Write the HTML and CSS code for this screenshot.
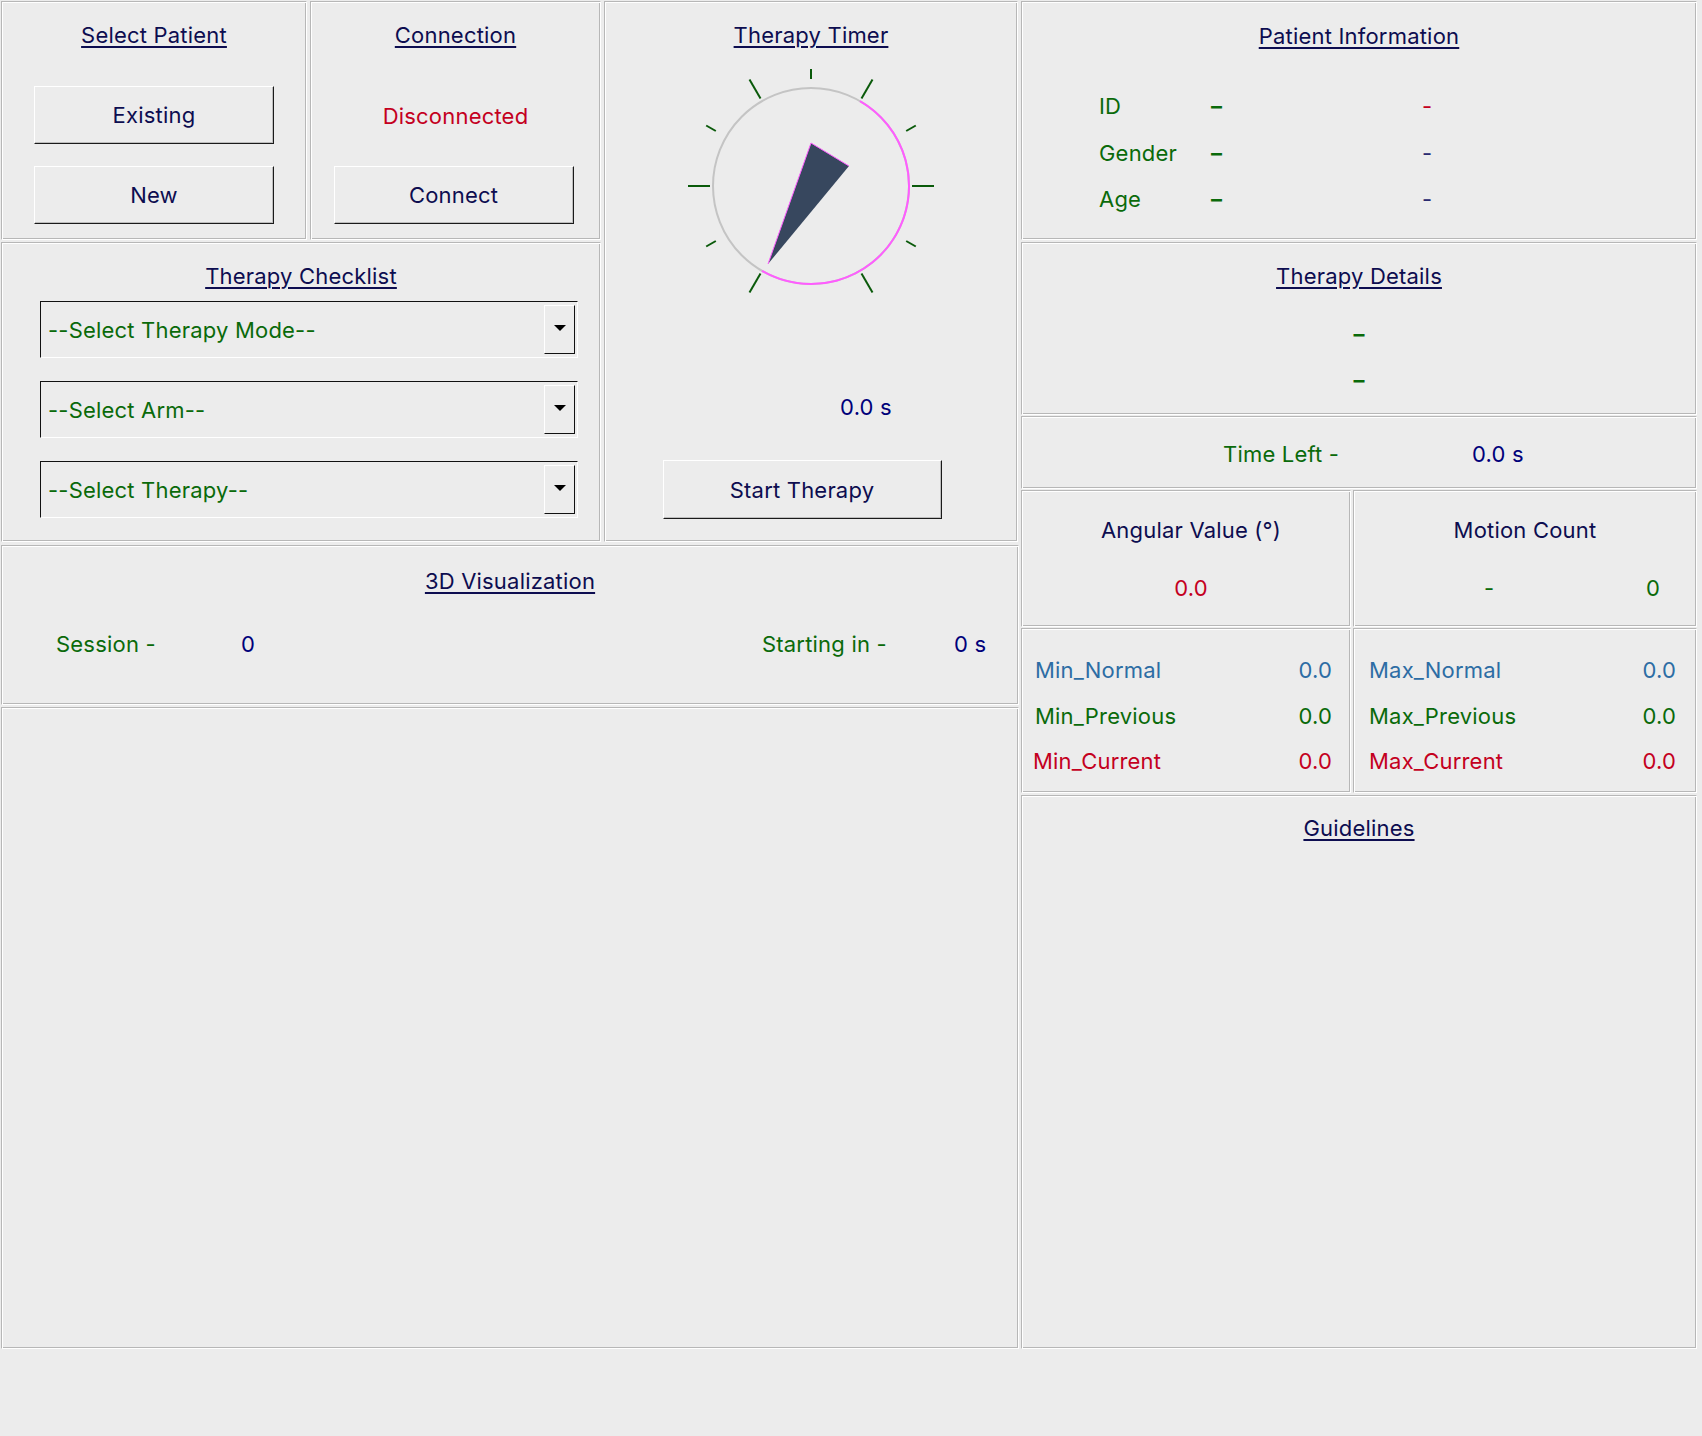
FILE: index.html
```html
<!DOCTYPE html>
<html>
<head>
<meta charset="utf-8">
<title>Therapy Console</title>
<link rel="stylesheet" href="styles.css">
</head>
<body>
<div class="app">
  <div class="leftcol">
    <div class="row1">
      <div class="lsub">
        <div class="toprow">
          <section class="frame sp">
            <h2 class="title">Select Patient</h2>
            <div class="btn btn-existing">Existing</div>
            <div class="btn btn-new">New</div>
          </section>
          <section class="frame conn">
            <h2 class="title">Connection</h2>
            <div class="status">Disconnected</div>
            <div class="btn btn-connect">Connect</div>
          </section>
        </div>
        <section class="frame checklist">
          <h2 class="title">Therapy Checklist</h2>
          <div class="combo combo-first"><span class="combo-text">--Select Therapy Mode--</span><span class="combo-btn"><span class="arrow"></span></span></div>
          <div class="combo"><span class="combo-text">--Select Arm--</span><span class="combo-btn"><span class="arrow"></span></span></div>
          <div class="combo"><span class="combo-text">--Select Therapy--</span><span class="combo-btn"><span class="arrow"></span></span></div>
        </section>
      </div>
      <section class="frame timer">
        <h2 class="title">Therapy Timer</h2>
        <svg class="dial" width="260" height="260" viewBox="0 0 260 260">
          <circle cx="130" cy="130" r="98" fill="none" stroke="#c4c4c4" stroke-width="2"/>
          <path d="M179 45.1 A98 98 0 0 1 81 214.9" fill="none" stroke="#ff5cff" stroke-width="2"/>
          <g stroke="#0a5a0a" stroke-width="2">
            <line x1="231" y1="130" x2="253" y2="130"/>
            <line x1="29" y1="130" x2="7" y2="130"/>
            <line x1="180.5" y1="42.5" x2="191.5" y2="23.5"/>
            <line x1="79.5" y1="42.5" x2="68.5" y2="23.5"/>
            <line x1="180.5" y1="217.5" x2="191.5" y2="236.5"/>
            <line x1="79.5" y1="217.5" x2="68.5" y2="236.5"/>
            <line x1="225.2" y1="75" x2="234.8" y2="69.5"/>
            <line x1="34.8" y1="75" x2="25.2" y2="69.5"/>
            <line x1="225.2" y1="185" x2="234.8" y2="190.5"/>
            <line x1="34.8" y1="185" x2="25.2" y2="190.5"/>
            <line x1="130" y1="23" x2="130" y2="13"/>
          </g>
          <polygon points="87,208 130,87 168,110" fill="#37475e"/>
          <polyline points="87,208 130,87 168,110" fill="none" stroke="#ff5cff" stroke-width="1"/>
        </svg>
        <div class="timer-value">0.0 s</div>
        <div class="btn btn-start">Start Therapy</div>
      </section>
    </div>
    <section class="frame viz">
      <h2 class="title">3D Visualization</h2>
      <div class="viz-row">
        <span class="lbl viz-session">Session -</span>
        <span class="val viz-count">0</span>
        <span class="lbl viz-start">Starting in -</span>
        <span class="val">0 s</span>
      </div>
    </section>
    <section class="frame canvas"></section>
  </div>

  <div class="rightcol">
    <section class="frame pinfo">
      <h2 class="title">Patient Information</h2>
      <div class="pgrid">
        <span class="lbl">ID</span><span class="bdash">–</span><span class="pval red">-</span>
        <span class="lbl">Gender</span><span class="bdash">–</span><span class="pval navy">-</span>
        <span class="lbl">Age</span><span class="bdash">–</span><span class="pval navy">-</span>
      </div>
    </section>
    <section class="frame tdetails">
      <h2 class="title">Therapy Details</h2>
      <div class="bdash tdash1">–</div>
      <div class="bdash tdash2">–</div>
    </section>
    <section class="frame timeleft">
      <span class="lbl tl-label">Time Left -</span>
      <span class="val">0.0 s</span>
    </section>
    <div class="pairrow">
      <section class="frame cell-left angular">
        <div class="head">Angular Value (°)</div>
        <div class="ang-val">0.0</div>
      </section>
      <section class="frame cell-right motion">
        <div class="head">Motion Count</div>
        <div class="motion-row"><span class="motion-dash">-</span><span class="motion-val">0</span></div>
      </section>
    </div>
    <div class="pairrow minmax">
      <section class="frame cell-left mm mm-left">
        <div class="mm-row blue"><span>Min_Normal</span><span>0.0</span></div>
        <div class="mm-row green"><span>Min_Previous</span><span>0.0</span></div>
        <div class="mm-row red mm-cur"><span>Min_Current</span><span>0.0</span></div>
      </section>
      <section class="frame cell-right mm mm-right">
        <div class="mm-row blue"><span>Max_Normal</span><span>0.0</span></div>
        <div class="mm-row green"><span>Max_Previous</span><span>0.0</span></div>
        <div class="mm-row red"><span>Max_Current</span><span>0.0</span></div>
      </section>
    </div>
    <section class="frame guidelines">
      <h2 class="title">Guidelines</h2>
    </section>
  </div>
</div>
</body>
</html>
```

FILE: styles.css
```css
* { box-sizing: border-box; }

html, body {
  margin: 0;
  padding: 0;
  background: #ececec;
}

body {
  font-family: "Inter", "Noto Sans", "Liberation Sans", sans-serif;
  font-size: 22px;
  line-height: 24px;
  letter-spacing: 0.2px;
  color: #0d0d50;
}

.app {
  display: flex;
  gap: 2px;
  padding: 1px;
  width: 1702px;
  height: 1436px;
}

.frame {
  border-top: 1px solid #b7b7b7;
  border-left: 1px solid #b7b7b7;
  border-bottom: 1px solid #ffffff;
  border-right: 1px solid #ffffff;
  box-shadow: inset 1px 1px 0 #ffffff, inset -1px -1px 0 #b7b7b7;
  background: #ececec;
}

.title {
  margin: 0;
  font-size: 22px;
  font-weight: normal;
  line-height: 24px;
  text-decoration: underline;
  text-underline-offset: 3px;
  text-decoration-thickness: 2px;
  color: #0d0d50;
  text-align: center;
}

/* Left column */
.leftcol {
  width: 1018px;
  display: flex;
  flex-direction: column;
}

.row1 {
  display: flex;
  gap: 3px;
  height: 541px;
}

.lsub {
  width: 600px;
  display: flex;
  flex-direction: column;
  gap: 2px;
}

.toprow {
  display: flex;
  gap: 3px;
  height: 239px;
}

.sp, .conn, .timer, .checklist, .viz, .pinfo, .tdetails, .guidelines, .angular, .motion {
  display: flex;
  flex-direction: column;
  align-items: center;
}

.sp { width: 306px; padding-top: 21px; }
.conn { width: 291px; padding-top: 21px; }

.btn {
  width: 240px;
  height: 58px;
  display: flex;
  align-items: center;
  justify-content: center;
  border-top: 1px solid #ffffff;
  border-left: 1px solid #ffffff;
  border-bottom: 1px solid #1a1a1a;
  border-right: 1px solid #1a1a1a;
  box-shadow: inset -1px -1px 0 #bdbdbd;
  background: #ececec;
  color: #0d0d50;
}

.btn-existing { margin-top: 39px; }
.btn-new { margin-top: 22px; }

.status {
  margin-top: 57px;
  color: #c4001e;
}

.btn-connect { margin-top: 38px; margin-right: 4px; }

.checklist {
  height: 300px;
  padding-top: 21px;
  align-items: flex-start;
}

.checklist .title { align-self: center; }

.combo {
  margin-left: 38px;
  margin-top: 23px;
  width: 538px;
  height: 57px;
  display: flex;
  align-items: center;
  justify-content: space-between;
  border-top: 1px solid #111;
  border-left: 1px solid #111;
  border-bottom: 1px solid #fff;
  border-right: 1px solid #fff;
}

.combo-first { margin-top: 13px; }

.combo-text {
  padding-left: 7px;
  color: #0a6a0a;
}

.combo-btn {
  width: 31px;
  height: 49px;
  margin-right: 2px;
  display: flex;
  align-items: center;
  justify-content: center;
  border-top: 1px solid #fff;
  border-left: 1px solid #fff;
  border-bottom: 1px solid #111;
  border-right: 1px solid #111;
}

.arrow {
  width: 0;
  height: 0;
  border-left: 6px solid transparent;
  border-right: 6px solid transparent;
  border-top: 6px solid #000;
  margin-top: -4px;
}

.timer {
  width: 414px;
  padding-top: 21px;
}

.dial {
  display: block;
  margin-top: 9px;
}

.timer-value {
  margin-top: 79px;
  width: 100%;
  text-align: center;
  padding-left: 110px;
  color: #00007a;
}

.btn-start {
  width: 279px;
  height: 59px;
  margin-top: 41px;
  margin-right: 18px;
}

.viz {
  height: 160px;
  margin-top: 3px;
  padding-top: 23px;
  align-items: stretch;
}

.viz-row {
  display: flex;
  margin-top: 39px;
  padding-left: 54px;
}

.lbl { color: #0a6a0a; }
.val { color: #00007a; }

.viz-session { width: 185px; }
.viz-count { width: 521px; }
.viz-start { width: 192px; }

.canvas {
  margin-top: 2px;
  height: 642px;
}

/* Right column */
.rightcol {
  width: 676px;
  display: flex;
  flex-direction: column;
}

.pinfo {
  height: 239px;
  padding-top: 22px;
  align-items: stretch;
}

.pgrid {
  margin-top: 46px;
  padding-left: 77px;
  display: grid;
  grid-template-columns: 112px 211px auto;
  grid-auto-rows: 24px;
  row-gap: 22.5px;
}

.bdash {
  color: #0a6a0a;
  font-weight: bold;
}

.red { color: #c4001e; }
.navy { color: #2a2a70; }
.green { color: #0a6a0a; }
.blue { color: #2d6da4; }

.tdetails {
  height: 173px;
  margin-top: 2px;
  padding-top: 21px;
}

.tdash1 { margin-top: 34px; }
.tdash2 { margin-top: 22px; }

.timeleft {
  height: 73px;
  margin-top: 1px;
  padding-top: 25px;
  padding-left: 201px;
  display: flex;
}

.tl-label { width: 249px; }

.pairrow {
  display: flex;
  gap: 2px;
  margin-top: 1px;
  height: 137px;
}

.cell-left { width: 330px; }
.cell-right { width: 344px; }

.angular, .motion { padding-top: 27px; }

.head { color: #0d0d50; }

.angular .head, .ang-val { padding-left: 10px; }

.ang-val {
  margin-top: 34px;
  color: #c4001e;
}

.motion-row {
  margin-top: 34px;
  align-self: stretch;
  display: flex;
  padding-left: 130px;
}

.motion-dash { width: 162px; color: #0a6a0a; }
.motion-val { color: #0a6a0a; }

.minmax {
  height: 165px;
  margin-top: 1px;
}

.mm {
  padding-top: 29px;
  display: flex;
  flex-direction: column;
  gap: 21.5px;
}

.mm-left { padding-left: 13px; padding-right: 18px; }
.mm-right { padding-left: 15px; padding-right: 20px; }

.mm-row {
  display: flex;
  justify-content: space-between;
}

.mm-cur { margin-left: -2px; }

.guidelines {
  margin-top: 2px;
  height: 554px;
  padding-top: 20px;
}
```
